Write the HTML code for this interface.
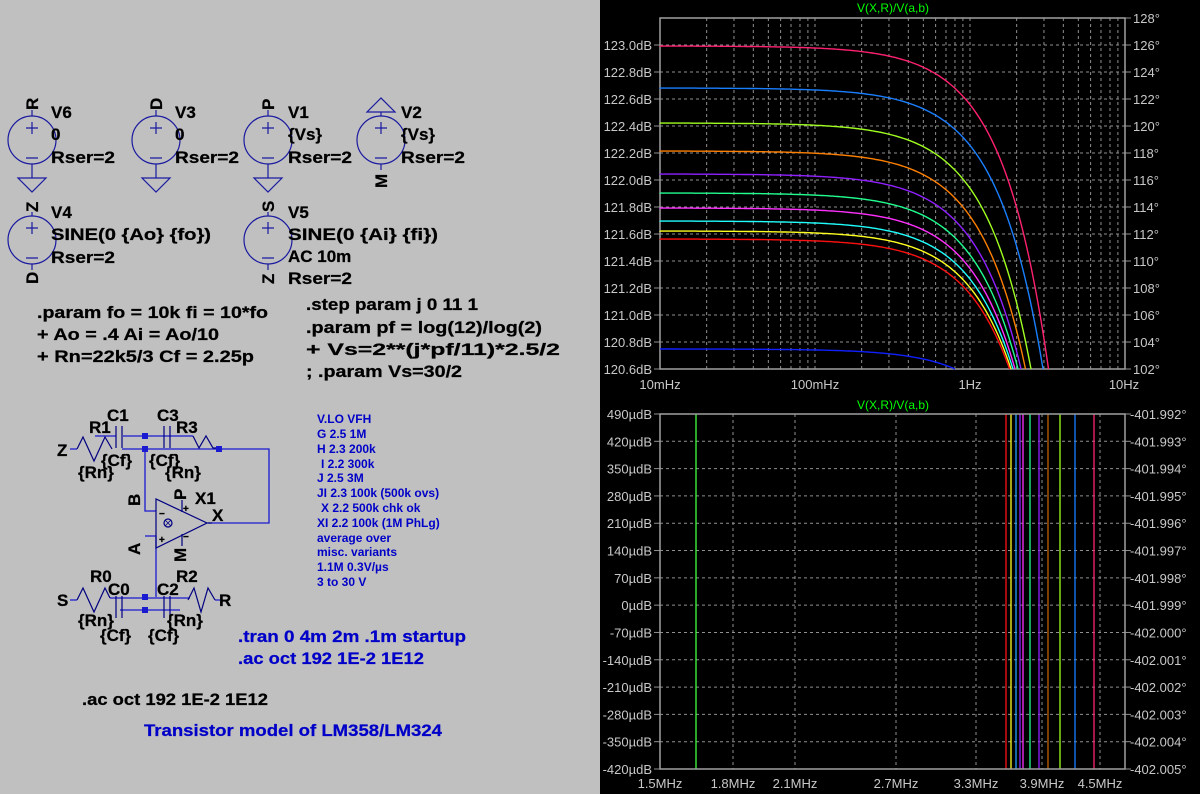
<!DOCTYPE html>
<html><head><meta charset="utf-8">
<style>
html,body{margin:0;padding:0;}
body{width:1200px;height:794px;overflow:hidden;background:#c0c0c0;position:relative;}
svg{position:absolute;left:0;top:0;}
.t{font-family:"Liberation Sans",Arial,sans-serif;font-weight:bold;font-size:17px;fill:#000;stroke:#000;stroke-width:0.25;}
.b{font-family:"Liberation Sans",Arial,sans-serif;font-weight:bold;font-size:12px;fill:#0000c8;}
.ax{font-family:"Liberation Sans",Arial,sans-serif;font-size:13px;fill:#c8c8c8;}
</style></head><body>
<svg id="s" width="1200" height="794" viewBox="0 0 1200 794">
<rect x="0" y="0" width="600" height="794" fill="#c0c0c0"/>
<rect x="600" y="0" width="600" height="794" fill="#000"/>

<g fill="none" stroke="#1a1aa0" stroke-width="1.2">
 <circle cx="32" cy="140" r="24"/><circle cx="156" cy="140" r="24"/><circle cx="268" cy="140" r="24"/><circle cx="381" cy="140" r="24"/>
 <circle cx="32" cy="240" r="24"/><circle cx="268" cy="240" r="24"/>
 <path d="M32 110v6 M32 164v14 M18 178h28l-14 14z"/>
 <path d="M156 110v6 M156 164v14 M142 178h28l-14 14z"/>
 <path d="M268 110v6 M268 164v14 M254 178h28l-14 14z"/>
 <path d="M381 112v4 M367 112h28l-14 -14z M381 164v6"/>
 <path d="M32 212v4 M32 264v6 M268 212v4 M268 264v6"/>
 <path d="M26 128h12 M32 122v12 M26 158h12"/><path d="M150 128h12 M156 122v12 M150 158h12"/>
 <path d="M262 128h12 M268 122v12 M262 158h12"/><path d="M375 128h12 M381 122v12 M375 158h12"/>
 <path d="M26 228h12 M32 222v12 M26 258h12"/><path d="M262 228h12 M268 222v12 M262 258h12"/>
</g>
<g class="t">
 <text x="51" y="118">V6</text><text x="51" y="140">0</text><text x="51" y="163" textLength="64" lengthAdjust="spacingAndGlyphs">Rser=2</text>
 <text x="175" y="118">V3</text><text x="175" y="140">0</text><text x="175" y="163" textLength="64" lengthAdjust="spacingAndGlyphs">Rser=2</text>
 <text x="288" y="118">V1</text><text x="288" y="140">{Vs}</text><text x="288" y="163" textLength="64" lengthAdjust="spacingAndGlyphs">Rser=2</text>
 <text x="401" y="118">V2</text><text x="401" y="140">{Vs}</text><text x="401" y="163" textLength="64" lengthAdjust="spacingAndGlyphs">Rser=2</text>
 <text x="51" y="218">V4</text><text x="51" y="240" textLength="160" lengthAdjust="spacingAndGlyphs">SINE(0 {Ao} {fo})</text><text x="51" y="263" textLength="64" lengthAdjust="spacingAndGlyphs">Rser=2</text>
 <text x="288" y="218">V5</text><text x="288" y="240" textLength="150" lengthAdjust="spacingAndGlyphs">SINE(0 {Ai} {fi})</text><text x="288" y="262">AC 10m</text><text x="288" y="284" textLength="64" lengthAdjust="spacingAndGlyphs">Rser=2</text>
 <text transform="translate(38,110) rotate(-90)">R</text>
 <text transform="translate(162,110) rotate(-90)">D</text>
 <text transform="translate(274,110) rotate(-90)">P</text>
 <text transform="translate(387,188) rotate(-90)">M</text>
 <text transform="translate(38,212) rotate(-90)">Z</text>
 <text transform="translate(38,284) rotate(-90)">D</text>
 <text transform="translate(274,212) rotate(-90)">S</text>
 <text transform="translate(274,284) rotate(-90)">Z</text>

 <text x="37" y="318" textLength="231" lengthAdjust="spacingAndGlyphs">.param fo = 10k fi = 10*fo</text>
 <text x="37" y="340" textLength="182" lengthAdjust="spacingAndGlyphs">+ Ao = .4 Ai = Ao/10</text>
 <text x="37" y="362" textLength="217" lengthAdjust="spacingAndGlyphs">+ Rn=22k5/3 Cf = 2.25p</text>
 <text x="306" y="310" textLength="172" lengthAdjust="spacingAndGlyphs">.step param j 0 11 1</text>
 <text x="306" y="333" textLength="236" lengthAdjust="spacingAndGlyphs">.param pf = log(12)/log(2)</text>
 <text x="306" y="355" textLength="254" lengthAdjust="spacingAndGlyphs">+ Vs=2**(j*pf/11)*2.5/2</text>
 <text x="306" y="377" textLength="156" lengthAdjust="spacingAndGlyphs">; .param Vs=30/2</text>
 <text x="82" y="705" textLength="186" lengthAdjust="spacingAndGlyphs">.ac oct 192 1E-2 1E12</text>
 <text x="238" y="642" style="fill:#0000c8;stroke:#0000c8" textLength="228" lengthAdjust="spacingAndGlyphs">.tran 0 4m 2m .1m startup</text>
 <text x="238" y="664" style="fill:#0000c8;stroke:#0000c8" textLength="186" lengthAdjust="spacingAndGlyphs">.ac oct 192 1E-2 1E12</text>
 <text x="144" y="736" style="fill:#0000c8;stroke:#0000c8" textLength="298" lengthAdjust="spacingAndGlyphs">Transistor model of LM358/LM324</text>
</g>
<g class="b">
 <text x="317" y="423">V.LO VFH</text>
 <text x="317" y="438">G 2.5 1M</text>
 <text x="317" y="453">H 2.3 200k</text>
 <text x="321" y="468">I 2.2 300k</text>
 <text x="317" y="482">J  2.5 3M</text>
 <text x="317" y="497">JI 2.3 100k (500k ovs)</text>
 <text x="321" y="512">X 2.2 500k chk ok</text>
 <text x="317" y="527">XI 2.2 100k (1M PhLg)</text>
 <text x="317" y="542">average over</text>
 <text x="317" y="556">misc. variants</text>
 <text x="317" y="571">1.1M 0.3V/µs</text>
 <text x="317" y="586">3 to 30 V</text>
</g>

<g fill="none" stroke="#1a1ad0" stroke-width="1.3">
 <path d="M70 449h7 M95 436h21 M123 436h70 M122 449h97 h50v74h-62"/>
 <path d="M145 449v62h11 M145 536h11v61 M145 597h-2"/>
 <path d="M70 600h7 M110 598h80 M120 610h60 M215 600h5"/>
</g>
<g fill="none" stroke="#000080" stroke-width="1.2">
 <path d="M77 449l6-12l11 24l11-24l7 12"/>
 <path d="M116 426v22 M122 426v22 M164 426v22 M170 426v22"/>
 <path d="M193 436l6 12l7-12l7 12l6-0"/>
 <path d="M77 600l6-12l11 24l11-24l5 10"/>
 <path d="M116 596v22 M122 596v22 M164 596v22 M170 596v22"/>
 <path d="M188 600l6-12l7 24l7-24l7 12"/>
 <path d="M156 499v49l51-25z"/>
 <path d="M182 500v12 M182 534v12 M208 523h4"/>
 <circle cx="168" cy="523" r="4"/>
 <path d="M165 520l6 6M171 520l-6 6" stroke-width="0.8"/>
</g>
<g fill="#1a1ad0">
 <rect x="142" y="433" width="6" height="6"/><rect x="142" y="446" width="6" height="6"/>
 <rect x="216" y="446" width="6" height="6"/>
 <rect x="142" y="594" width="6" height="6"/><rect x="142" y="607" width="6" height="6"/>
</g>
<g class="t">
 <text x="57" y="456">Z</text><text x="57" y="606">S</text><text x="219" y="606">R</text>
 <text x="107" y="421">C1</text><text x="157" y="421">C3</text>
 <text x="89" y="433">R1</text><text x="176" y="433">R3</text>
 <text x="101" y="466">{Cf}</text><text x="149" y="466">{Cf}</text>
 <text x="78" y="478">{Rn}</text><text x="165" y="478">{Rn}</text>
 <text x="90" y="582">R0</text><text x="108" y="595">C0</text><text x="157" y="595">C2</text><text x="176" y="582">R2</text>
 <text x="78" y="626">{Rn}</text><text x="167" y="626">{Rn}</text>
 <text x="100" y="641">{Cf}</text><text x="148" y="641">{Cf}</text>
 <text x="195" y="504">X1</text><text x="212" y="521">X</text>
 <text transform="translate(140,506) rotate(-90)">B</text>
 <text transform="translate(140,555) rotate(-90)">A</text>
 <text transform="translate(186,500) rotate(-90)">P</text>
 <text transform="translate(186,562) rotate(-90)">M</text>
 <text x="159" y="517" style="font-size:10px">−</text><text x="159" y="543" style="font-size:10px">+</text>
 <text x="183" y="512" style="font-size:10px">+</text><text x="183" y="540" style="font-size:10px">−</text>
</g>

<g id="plots"></g>
</svg>
<script>
(function(){
var NS="http://www.w3.org/2000/svg",g=document.getElementById("plots");
function el(t,a,txt){var e=document.createElementNS(NS,t);for(var k in a)e.setAttribute(k,a[k]);if(txt!=null)e.textContent=txt;g.appendChild(e);return e;}
var L=660,R=1125;
var T=18,B=369;
el("text",{x:893,y:12,"text-anchor":"middle",fill:"#00ff00","font-family":"Liberation Sans,sans-serif","font-size":"12"},"V(X,R)/V(a,b)");
var dec=155;
for(var d=0;d<3;d++)for(var m=1;m<=10;m++){var x=L+dec*(d+Math.log10(m));if(x<=L+1||x>=R-1)continue;el("line",{x1:x,y1:T,x2:x,y2:B,stroke:"#909090","stroke-width":"1","stroke-dasharray":"3,3"});}
var dbl=["123.0","122.8","122.6","122.4","122.2","122.0","121.8","121.6","121.4","121.2","121.0","120.8","120.6"];
for(var i=0;i<13;i++){var y=45+27*i;if(i<12)el("line",{x1:L,y1:y,x2:R,y2:y,stroke:"#909090","stroke-dasharray":"3,3"});
 el("text",{x:652,y:y+5,"text-anchor":"end","class":"ax"},dbl[i]+"dB");
 el("line",{x1:L-6,y1:y,x2:L,y2:y,stroke:"#909090"});}
for(var i=0;i<14;i++){var y=18+27*i;el("line",{x1:R,y1:y,x2:R+6,y2:y,stroke:"#909090"});el("text",{x:1133,y:y+5,"class":"ax"},(128-2*i)+"°");}
var xl=[["10mHz",660],["100mHz",815],["1Hz",970],["10Hz",1124]];
xl.forEach(function(a){el("text",{x:a[1],y:389,"text-anchor":"middle","class":"ax"},a[0]);});
el("rect",{x:L,y:T,width:R-L,height:B-T,fill:"none",stroke:"#a0a0a0","stroke-width":"1.5"});
var cv=[[46,1048.5,"#ff2070"],[88,1043,"#1a7fff"],[123,1031,"#a0ff20"],[151,1025.5,"#ff8000"],[174,1021,"#9020ff"],[193,1018,"#20ff90"],[208,1015,"#ff30ff"],[221,1013,"#20ffff"],[231,1011,"#ffff20"],[239,1009.5,"#ff1010"],[349,955,"#1020ff"]];
cv.forEach(function(c){var y0=c[0],xe=c[1],D=B-y0,s=46,p="M"+L+" "+y0;
 for(var x=L;x<=xe;x+=2){var y=y0+D*Math.exp((x-xe)/s);if(y>B)y=B;p+=" L"+x+" "+y.toFixed(1);}
 p+=" L"+xe+" "+B;el("path",{d:p,fill:"none",stroke:c[2],"stroke-width":"1.4"});});
T=414;B=769;
el("text",{x:893,y:409,"text-anchor":"middle",fill:"#00ff00","font-family":"Liberation Sans,sans-serif","font-size":"12"},"V(X,R)/V(a,b)");
var vx=[733,795,896,976,1042,1100];
vx.forEach(function(x){el("line",{x1:x,y1:T,x2:x,y2:B,stroke:"#909090","stroke-dasharray":"3,3"});});
var st=(B-T)/13;
var ul=["490","420","350","280","210","140","70","0","-70","-140","-210","-280","-350","-420"];
for(var i=0;i<14;i++){var y=T+st*i;if(i>0&&i<13)el("line",{x1:L,y1:y,x2:R,y2:y,stroke:"#909090","stroke-dasharray":"3,3"});
 el("line",{x1:L-6,y1:y,x2:L,y2:y,stroke:"#909090"});el("line",{x1:R,y1:y,x2:R+6,y2:y,stroke:"#909090"});
 el("text",{x:652,y:y+5,"text-anchor":"end","class":"ax"},ul[i]+"µdB");
 el("text",{x:1130,y:y+5,"class":"ax"},"-"+(401.992+0.001*i).toFixed(3)+"°");}
var bl=[["1.5MHz",660],["1.8MHz",733],["2.1MHz",795],["2.7MHz",896],["3.3MHz",976],["3.9MHz",1042],["4.5MHz",1100]];
bl.forEach(function(a){el("text",{x:a[1],y:788,"text-anchor":"middle","class":"ax"},a[0]);});
var vl=[[696,"#40ff40"],[1006,"#ff1010"],[1011,"#ffff20"],[1016,"#20a0ff"],[1020,"#9020ff"],[1023,"#ff30ff"],[1030,"#20ff90"],[1039,"#9020ff"],[1048,"#c06000"],[1060,"#a0ff20"],[1075,"#1a7fff"],[1094,"#ff2070"]];
vl.forEach(function(a){el("line",{x1:a[0],y1:T,x2:a[0],y2:B,stroke:a[1],"stroke-width":"1.3"});});
el("rect",{x:L,y:T,width:R-L,height:B-T,fill:"none",stroke:"#a0a0a0","stroke-width":"1.5"});
})();
</script>
</body></html>
